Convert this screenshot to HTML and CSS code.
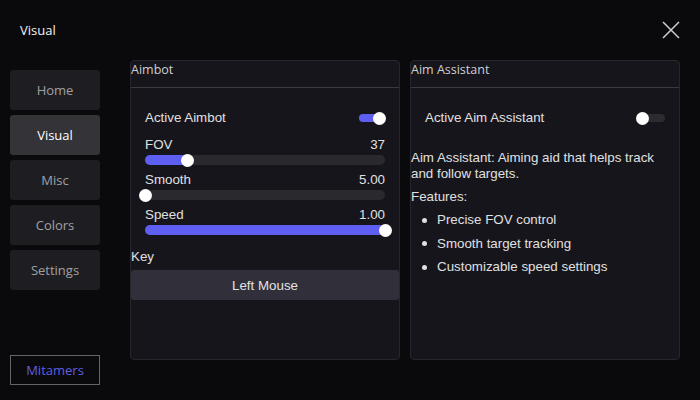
FILE: index.html
```html
<!DOCTYPE html>
<html>
<head>
<meta charset="utf-8">
<link rel="stylesheet" href="styles.css">
</head>
<body>
<div class="app">
  <header class="topbar">
    <div class="title">Visual</div>
    <button class="close" aria-label="Close">
      <svg width="18" height="18" viewBox="0 0 18 18"><path d="M1 1 L17 17 M17 1 L1 17" stroke="#d0d0d0" stroke-width="1.5" fill="none"/></svg>
    </button>
  </header>
  <nav class="sidebar">
    <div class="nav-item">Home</div>
    <div class="nav-item active">Visual</div>
    <div class="nav-item">Misc</div>
    <div class="nav-item">Colors</div>
    <div class="nav-item">Settings</div>
    <div class="brand">Mitamers</div>
  </nav>
  <main class="content">
    <section class="panel">
      <div class="panel-head">Aimbot</div>
      <div class="panel-body">
        <div class="toggle-row">
          <span>Active Aimbot</span>
          <span class="toggle on"><span class="knob"></span></span>
        </div>
        <div class="slider-group first">
          <div class="slider-label"><span>FOV</span><span>37</span></div>
          <div class="track"><div class="fill" style="width:17.8%"></div><div class="thumb" style="left:17.8%"></div></div>
        </div>
        <div class="slider-group">
          <div class="slider-label"><span>Smooth</span><span>5.00</span></div>
          <div class="track"><div class="fill" style="width:0%"></div><div class="thumb" style="left:0%"></div></div>
        </div>
        <div class="slider-group">
          <div class="slider-label"><span>Speed</span><span>1.00</span></div>
          <div class="track"><div class="fill" style="width:100%"></div><div class="thumb" style="left:100%"></div></div>
        </div>
      </div>
      <div class="key-label">Key</div>
      <div class="key-btn">Left Mouse</div>
    </section>
    <section class="panel">
      <div class="panel-head">Aim Assistant</div>
      <div class="panel-body">
        <div class="toggle-row">
          <span>Active Aim Assistant</span>
          <span class="toggle"><span class="knob"></span></span>
        </div>
      </div>
      <p class="desc">Aim Assistant: Aiming aid that helps track and follow targets.</p>
      <p class="features">Features:</p>
      <ul class="feature-list">
        <li>Precise FOV control</li>
        <li>Smooth target tracking</li>
        <li>Customizable speed settings</li>
      </ul>
    </section>
  </main>
</div>
</body>
</html>
```
FILE: styles.css
```css
* { box-sizing: border-box; }
html, body { margin: 0; padding: 0; }
body {
  background: #0a0a0c;
  width: 700px;
  height: 400px;
  overflow: hidden;
  font-family: "Liberation Sans", Arial, sans-serif;
  color: #e0e0e0;
}
.app {
  display: grid;
  grid-template-columns: 130px 1fr;
  grid-template-rows: 60px 340px;
  height: 400px;
}
.topbar {
  grid-column: 1 / 3;
  display: flex;
  align-items: center;
  justify-content: space-between;
  padding: 0 20px 0 20px;
}
.title {
  font-family: "Open Sans", sans-serif;
  font-size: 13px;
  color: #f2f2f2;
}
.close {
  background: none;
  border: 0;
  padding: 0;
  width: 18px;
  height: 18px;
  display: block;
  cursor: pointer;
}
.close svg { display: block; }
.sidebar {
  display: flex;
  flex-direction: column;
  gap: 5px;
  padding: 10px 0 15px 10px;
}
.nav-item {
  width: 90px;
  height: 40px;
  display: flex;
  align-items: center;
  justify-content: center;
  background: #1e1e22;
  border-radius: 3px;
  color: #a0a0a4;
  font-family: "Open Sans", sans-serif;
  font-size: 13px;
}
.nav-item.active {
  background: #333338;
  color: #ffffff;
}
.brand {
  margin-top: auto;
  width: 90px;
  height: 30px;
  border: 1px solid #646468;
  display: flex;
  align-items: center;
  justify-content: center;
  color: #5f5fe0;
  font-family: "Open Sans", sans-serif;
  font-size: 13px;
}
.content {
  display: flex;
  gap: 10px;
  align-items: flex-start;
}
.panel {
  width: 270px;
  height: 300px;
  background: #16151b;
  border: 1px solid #27262d;
  border-radius: 4px;
}
.panel-head {
  font-family: "Open Sans", sans-serif;
  font-size: 12.5px;
  color: #cfcfd2;
  line-height: 18px;
  height: 27px;
  border-bottom: 1px solid #3b3a41;
}
.panel-body {
  padding: 22px 14px 0 14px;
}
.toggle-row {
  display: flex;
  justify-content: space-between;
  align-items: center;
  height: 16px;
  font-size: 13.33px;
  line-height: 16px;
}
.toggle {
  position: relative;
  width: 26px;
  height: 8px;
  border-radius: 4px;
  background: #2c2c30;
}
.toggle .knob {
  position: absolute;
  top: -2.5px;
  left: -3px;
  width: 13px;
  height: 13px;
  border-radius: 50%;
  background: #fff;
}
.toggle.on { background: #5e5ef2; }
.toggle.on .knob { left: auto; right: -1px; }
.slider-group { margin-bottom: 7px; }
.slider-group.first { margin-top: 11px; }
.slider-label {
  display: flex;
  justify-content: space-between;
  font-size: 13.33px;
  line-height: 16px;
  margin-bottom: 2px;
}
.track {
  position: relative;
  height: 10px;
  border-radius: 5px;
  background: #2a2a2e;
}
.fill {
  height: 10px;
  border-radius: 5px;
  background: #5e5ef2;
}
.thumb {
  position: absolute;
  top: -1.5px;
  width: 13px;
  height: 13px;
  margin-left: -6.5px;
  border-radius: 50%;
  background: #fff;
}
.key-label {
  font-size: 13.33px;
  line-height: 16px;
  margin-top: 14px;
}
.key-btn {
  margin-top: 5px;
  height: 30px;
  background: #302f3a;
  border-radius: 3px;
  display: flex;
  align-items: center;
  justify-content: center;
  font-size: 13.33px;
  color: #e2e2e2;
}
.desc {
  margin: 24px 0 0 0;
  font-size: 13.33px;
  line-height: 16px;
  padding-right: 20px;
}
.features {
  margin: 7px 0 0 0;
  font-size: 13.33px;
  line-height: 16px;
}
.feature-list {
  list-style: none;
  margin: 7px 0 0 0;
  padding: 0;
}
.feature-list li {
  display: flex;
  align-items: center;
  font-size: 13.33px;
  line-height: 16px;
  margin-bottom: 7.5px;
  padding-left: 11px;
}
.feature-list li::before {
  content: "";
  width: 5px;
  height: 5px;
  border-radius: 50%;
  background: #e0e0e0;
  margin-right: 10px;
  flex: none;
}
```
